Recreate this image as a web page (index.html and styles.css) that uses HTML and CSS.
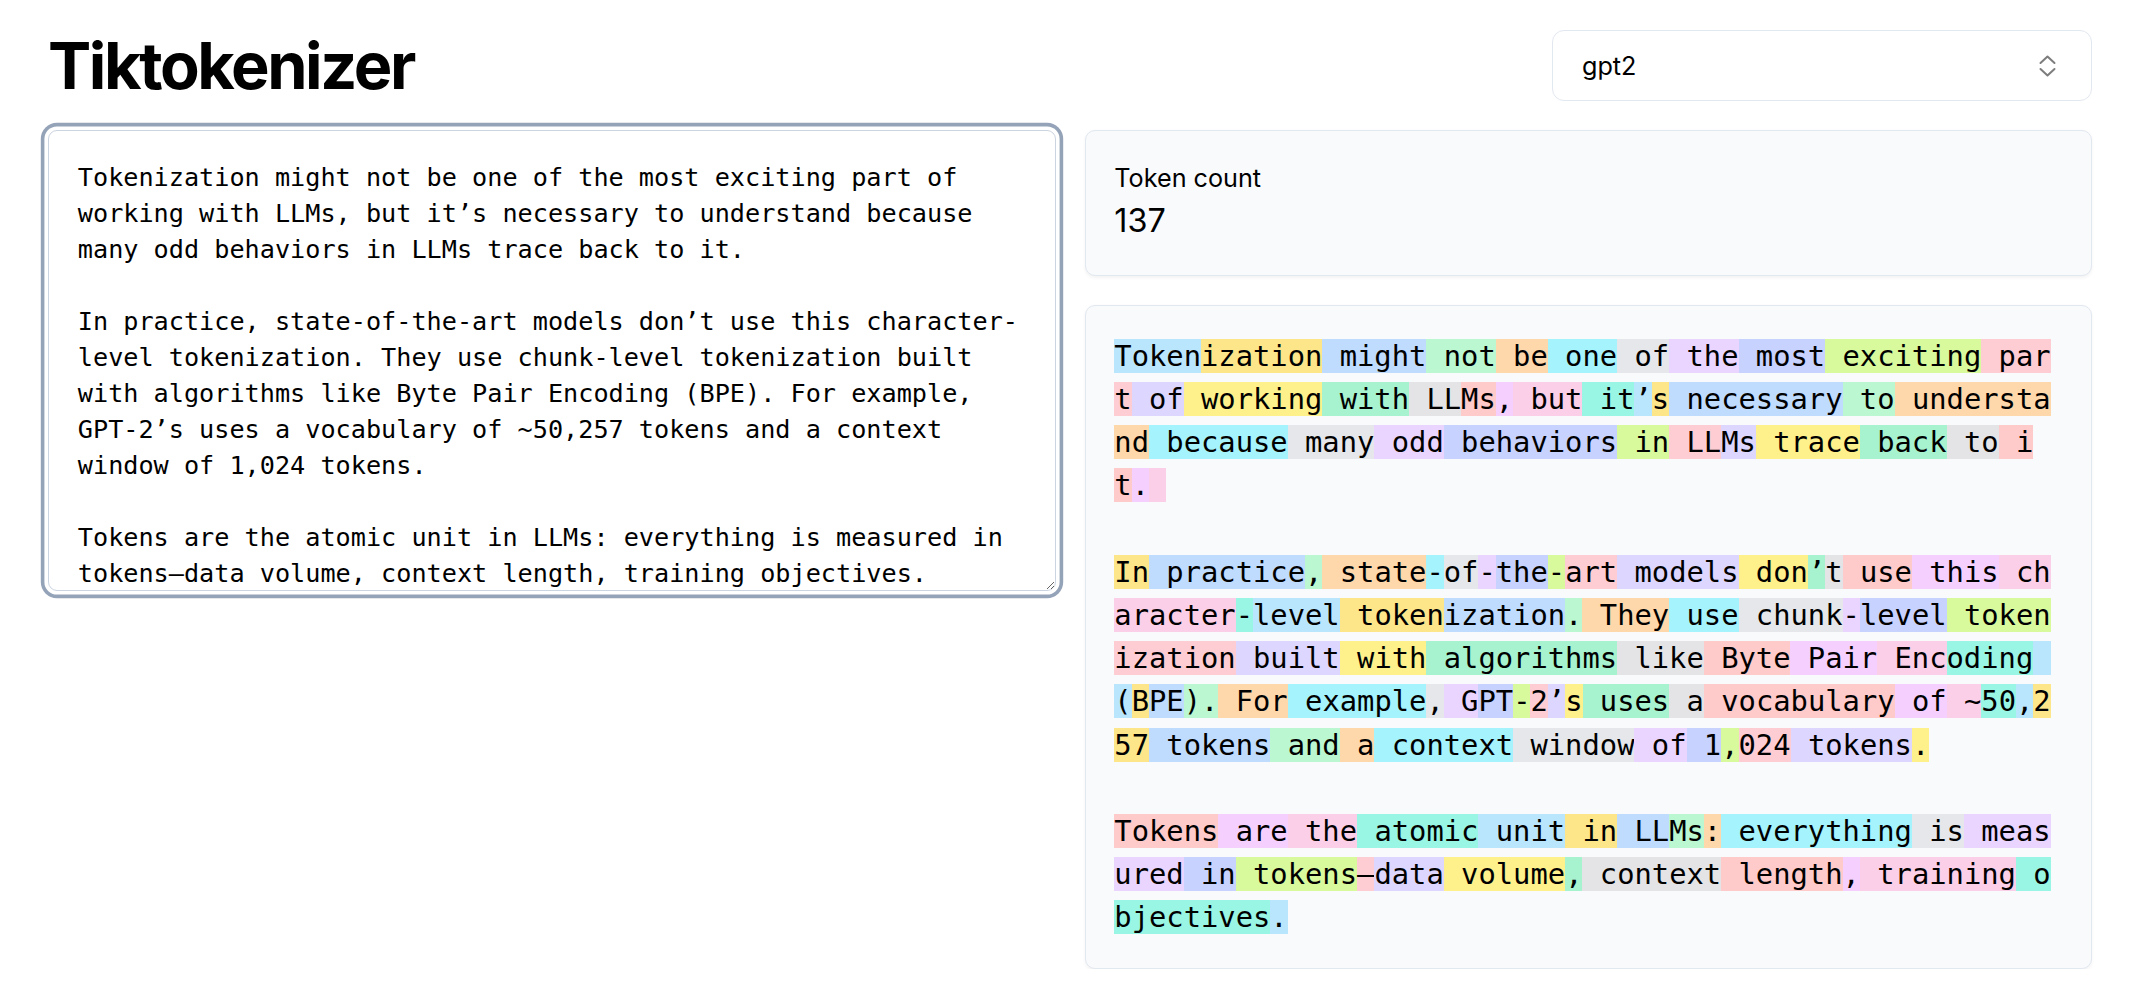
FILE: index.html
```html
<!DOCTYPE html>
<html lang="en">
<head>
<meta charset="utf-8">
<title>Tiktokenizer</title>
<link rel="stylesheet" href="styles.css">
</head>
<body>
<main class="page">
  <header class="header">
    <h1 class="title">Tiktokenizer</h1>
    <div class="select">
      <span class="select-value">gpt2</span>
      <svg class="select-icon" width="17" height="22" viewBox="0 0 17 22" fill="none" stroke="#7d7d7d" stroke-width="2" stroke-linecap="round" stroke-linejoin="round" aria-hidden="true">
        <polyline points="1.5,8 8.5,1.5 15.5,8"/>
        <polyline points="1.5,14 8.5,20.5 15.5,14"/>
      </svg>
    </div>
  </header>
  <div class="grid">
    <section class="col">
      <textarea class="editor" spellcheck="false">Tokenization might not be one of the most exciting part of working with LLMs, but it’s necessary to understand because many odd behaviors in LLMs trace back to it.

In practice, state-of-the-art models don’t use this character-level tokenization. They use chunk-level tokenization built with algorithms like Byte Pair Encoding (BPE). For example, GPT-2’s uses a vocabulary of ~50,257 tokens and a context window of 1,024 tokens.

Tokens are the atomic unit in LLMs: everything is measured in tokens—data volume, context length, training objectives.</textarea>
    </section>
    <section class="col">
      <div class="card count-card">
        <p class="count-label">Token count</p>
        <p class="count-value">137</p>
      </div>
      <pre class="card tokens"><span class="t0">Token</span><span class="t1">ization</span><span class="t2"> might</span><span class="t3"> not</span><span class="t4"> be</span><span class="t5"> one</span><span class="t6"> of</span><span class="t7"> the</span><span class="t8"> most</span><span class="t9"> exciting</span><span class="t10"> part</span><span class="t11"> of</span><span class="t12"> working</span><span class="t13"> with</span><span class="t14"> LL</span><span class="t15">Ms</span><span class="t16">,</span><span class="t17"> but</span><span class="t18"> it</span><span class="t0">’</span><span class="t1">s</span><span class="t2"> necessary</span><span class="t3"> to</span><span class="t4"> understand</span><span class="t5"> because</span><span class="t6"> many</span><span class="t7"> odd</span><span class="t8"> behaviors</span><span class="t9"> in</span><span class="t10"> LL</span><span class="t11">Ms</span><span class="t12"> trace</span><span class="t13"> back</span><span class="t14"> to</span><span class="t15"> it</span><span class="t16">.</span><span class="t17">&nbsp;</span>

<span class="t1">In</span><span class="t2"> practice</span><span class="t3">,</span><span class="t4"> state</span><span class="t5">-</span><span class="t6">of</span><span class="t7">-</span><span class="t8">the</span><span class="t9">-</span><span class="t10">art</span><span class="t11"> models</span><span class="t12"> don</span><span class="t13">’</span><span class="t14">t</span><span class="t15"> use</span><span class="t16"> this</span><span class="t17"> character</span><span class="t18">-</span><span class="t0">level</span><span class="t1"> token</span><span class="t2">ization</span><span class="t3">.</span><span class="t4"> They</span><span class="t5"> use</span><span class="t6"> chunk</span><span class="t7">-</span><span class="t8">level</span><span class="t9"> token</span><span class="t10">ization</span><span class="t11"> built</span><span class="t12"> with</span><span class="t13"> algorithms</span><span class="t14"> like</span><span class="t15"> Byte</span><span class="t16"> Pair</span><span class="t17"> Enc</span><span class="t18">oding</span><span class="t0"> (</span><span class="t1">B</span><span class="t2">PE</span><span class="t3">).</span><span class="t4"> For</span><span class="t5"> example</span><span class="t6">,</span><span class="t7"> G</span><span class="t8">PT</span><span class="t9">-</span><span class="t10">2</span><span class="t11">’</span><span class="t12">s</span><span class="t13"> uses</span><span class="t14"> a</span><span class="t15"> vocabulary</span><span class="t16"> of</span><span class="t17"> ~</span><span class="t18">50</span><span class="t0">,</span><span class="t1">257</span><span class="t2"> tokens</span><span class="t3"> and</span><span class="t4"> a</span><span class="t5"> context</span><span class="t6"> window</span><span class="t7"> of</span><span class="t8"> 1</span><span class="t9">,</span><span class="t10">024</span><span class="t11"> tokens</span><span class="t12">.</span>

<span class="t15">Tokens</span><span class="t16"> are</span><span class="t17"> the</span><span class="t18"> atomic</span><span class="t0"> unit</span><span class="t1"> in</span><span class="t2"> LL</span><span class="t3">Ms</span><span class="t4">:</span><span class="t5"> everything</span><span class="t6"> is</span><span class="t7"> measured</span><span class="t8"> in</span><span class="t9"> tokens</span><span class="t10">—</span><span class="t11">data</span><span class="t12"> volume</span><span class="t13">,</span><span class="t14"> context</span><span class="t15"> length</span><span class="t16">,</span><span class="t17"> training</span><span class="t18"> objectives</span><span class="t0">.</span></pre>
    </section>
  </div>
</main>
</body>
</html>
```

FILE: styles.css
```css
html, body {
  margin: 0;
  padding: 0;
  background: #ffffff;
  color: #000000;
  font-family: Inter, "Noto Sans", "Liberation Sans", sans-serif;
}

.page {
  width: 2044px;
  margin-left: 48px;
  padding-top: 30px;
  display: flex;
  flex-direction: column;
  gap: 29px;
}

.header {
  display: flex;
  align-items: center;
  justify-content: space-between;
  height: 71px;
}

.title {
  margin: 0;
  font-size: 64.8px;
  line-height: 72px;
  font-weight: 700;
  letter-spacing: -2.4px;
}

.select {
  width: 540px;
  height: 71px;
  box-sizing: border-box;
  border: 1px solid #e2e8f0;
  border-radius: 12px;
  background: #ffffff;
  display: flex;
  align-items: center;
  justify-content: space-between;
  padding: 0 35px 0 29px;
  font-size: 25.2px;
  line-height: 36px;
}

.select-icon {
  display: block;
}

.grid {
  display: grid;
  grid-template-columns: 1fr 1fr;
  gap: 29px;
  align-items: start;
}

.col {
  display: flex;
  flex-direction: column;
  gap: 29px;
  min-width: 0;
}

.editor {
  display: block;
  width: 100%;
  height: 461px;
  box-sizing: border-box;
  margin: 0;
  border: 1px solid #cbd5e1;
  border-radius: 9px;
  padding: 28.8px;
  font-family: "DejaVu Sans Mono", "Liberation Mono", monospace;
  font-size: 25.2px;
  line-height: 36px;
  color: #000000;
  background: #ffffff;
  resize: vertical;
  overflow: hidden;
  outline: none;
  box-shadow: 0 0 0 3.6px #ffffff, 0 0 0 7.2px #94a3b8;
}

.card {
  margin: 0;
  box-sizing: border-box;
  border: 1px solid #e2e8f0;
  border-radius: 10px;
  background: #f8fafc;
  padding: 28.8px;
  box-shadow: 0 1.8px 3.6px rgba(0, 0, 0, 0.05);
}

.count-label {
  margin: 0;
  font-size: 25.2px;
  line-height: 36px;
}

.count-value {
  margin: 0;
  font-size: 32.4px;
  line-height: 50.4px;
}

.tokens {
  font-family: "DejaVu Sans Mono", "Liberation Mono", monospace;
  font-size: 28.8px;
  line-height: 43.2px;
  white-space: pre-wrap;
  word-break: break-all;
  color: #000000;
}

.t0 { background: #bae6fd; }
.t1 { background: #fde68a; }
.t2 { background: #bfdbfe; }
.t3 { background: #bbf7d0; }
.t4 { background: #fed7aa; }
.t5 { background: #a5f3fc; }
.t6 { background: #e5e7eb; }
.t7 { background: #e9d5ff; }
.t8 { background: #c7d2fe; }
.t9 { background: #d9f99d; }
.t10 { background: #fecdd3; }
.t11 { background: #ddd6fe; }
.t12 { background: #fef08a; }
.t13 { background: #a7f3d0; }
.t14 { background: #e4e4e7; }
.t15 { background: #fecaca; }
.t16 { background: #f5d0fe; }
.t17 { background: #fbcfe8; }
.t18 { background: #99f6e4; }
```
